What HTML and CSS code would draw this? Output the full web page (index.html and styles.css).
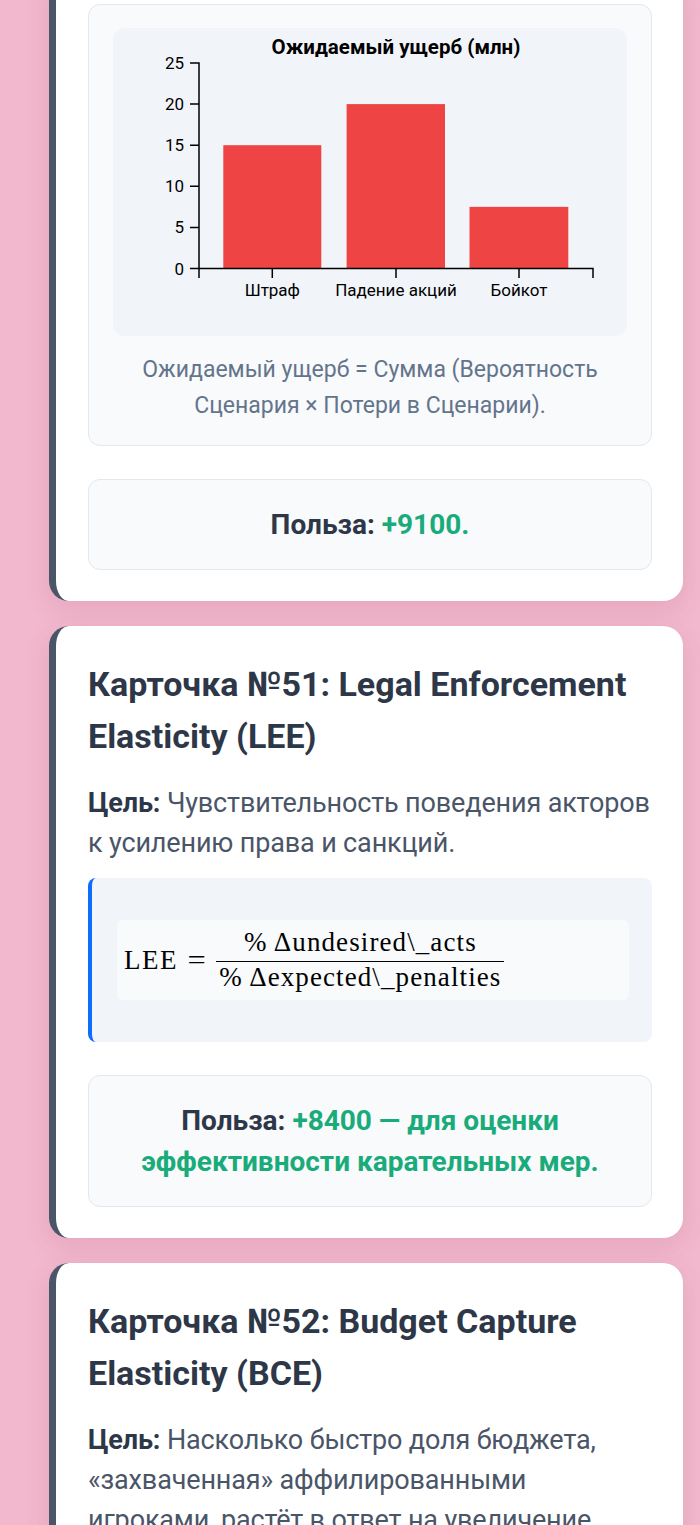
FILE: index.html
```html
<!DOCTYPE html>
<html lang="ru">
<head>
<meta charset="utf-8">
<title>Карточки</title>
<link rel="stylesheet" href="styles.css">
</head>
<body>
<main class="page">
  <section class="card card-first">
    <div class="chart-box">
      <div class="chart-area">
        <svg class="chart" viewBox="0 0 514 308" width="514" height="308">
          <text class="ch-title" x="283" y="26" text-anchor="middle">Ожидаемый ущерб (млн)</text>
          <g fill="#ef4444">
            <rect x="110.3" y="117.2" width="98" height="123.3"/>
            <rect x="233.6" y="76.1" width="98.4" height="164.4"/>
            <rect x="356.5" y="178.85" width="98.8" height="61.65"/>
          </g>
          <g stroke="#000" stroke-width="1.5" fill="none">
            <path d="M77,35H86V240.5H77"/>
            <path d="M77,76.1H86M77,117.2H86M77,158.3H86M77,199.4H86"/>
            <path d="M86,250V240.5H480V250"/>
            <path d="M159.3,240.5V250M283,240.5V250M406,240.5V250"/>
          </g>
          <g class="ch-label" text-anchor="end">
            <text x="71" y="41">25</text>
            <text x="71" y="82.1">20</text>
            <text x="71" y="123.2">15</text>
            <text x="71" y="164.3">10</text>
            <text x="71" y="205.4">5</text>
            <text x="71" y="246.5">0</text>
          </g>
          <g class="ch-label" text-anchor="middle">
            <text x="159.3" y="268">Штраф</text>
            <text x="283" y="268">Падение акций</text>
            <text x="406" y="268">Бойкот</text>
          </g>
        </svg>
      </div>
      <p class="caption">Ожидаемый ущерб = Сумма (Вероятность Сценария × Потери в Сценарии).</p>
    </div>
    <div class="benefit"><span class="benefit-label">Польза:</span> <span class="green">+9100.</span></div>
  </section>

  <section class="card">
    <h3 class="card-title">Карточка №51: Legal Enforcement Elasticity (LEE)</h3>
    <p class="goal"><strong class="goal-label">Цель:</strong> Чувствительность поведения акторов к усилению права и санкций.</p>
    <div class="formula-box">
      <div class="formula">
        <span class="mi">LEE</span><span class="eq">=</span><span class="frac"><span class="num">% Δundesired\_acts</span><span class="den">% Δexpected\_penalties</span></span>
      </div>
    </div>
    <div class="benefit"><span class="benefit-label">Польза:</span> <span class="green">+8400 — для оценки эффективности карательных мер.</span></div>
  </section>

  <section class="card">
    <h3 class="card-title">Карточка №52: Budget Capture Elasticity (BCE)</h3>
    <p class="goal"><strong class="goal-label">Цель:</strong> Насколько быстро доля бюджета, «захваченная» аффилированными игроками, растёт в ответ на увеличение общего объёма бюджета.</p>
  </section>
</main>
</body>
</html>
```

FILE: styles.css
```css
* { box-sizing: border-box; }
html, body { margin: 0; padding: 0; }
body {
  background: #f2b8cd;
  font-family: Roboto, "Noto Sans", "Liberation Sans", sans-serif;
  color: #4a5568;
  overflow: hidden;
}
.page {
  display: flex;
  flex-direction: column;
  gap: 25px;
  padding: 0 17px 60px 49px;
}
.card {
  background: #ffffff;
  border-left: 7px solid #4a5568;
  border-radius: 20px;
  padding: 32px 31px 31px 32px;
  box-shadow: 0 8px 26px rgba(150, 60, 95, 0.14);
}
.card-first { margin-top: -28px; }

.chart-box {
  background: #f8fafc;
  border: 1px solid #e2e8f0;
  border-radius: 12px;
  padding: 23px 24px 21px;
}
.chart-area {
  background: #f1f5f9;
  border-radius: 12px;
  height: 308px;
}
.chart { display: block; }
.ch-title { font-family: Roboto, sans-serif; font-weight: 700; font-size: 20.5px; fill: #000; }
.ch-label { font-family: Roboto, sans-serif; font-size: 17px; fill: #000; }
.caption {
  margin: 16px 0 0;
  text-align: center;
  font-size: 23px;
  line-height: 36px;
  color: #64748b;
}

.benefit {
  margin-top: 33px;
  background: #f8fafc;
  border: 1px solid #e2e8f0;
  border-radius: 12px;
  padding: 24px;
  text-align: center;
  font-size: 28px;
  line-height: 41px;
  font-weight: 700;
  color: #2d3748;
}
.green { color: #1aab7a; }

.card-title {
  margin: 0 0 21px;
  font-size: 34px;
  line-height: 52px;
  font-weight: 700;
  color: #2d3748;
}
.goal {
  margin: 0 0 15px;
  font-size: 27px;
  line-height: 40px;
  letter-spacing: -0.15px;
  color: #4a5568;
}
.goal-label { color: #2d3748; font-weight: 700; }

.formula-box {
  background: #f1f5f9;
  border-left: 4px solid #0d6efd;
  border-radius: 8px;
  padding: 42px 23px 42px 25px;
}
.formula {
  background: #f8fafc;
  border-radius: 6px;
  height: 80px;
  display: flex;
  align-items: center;
  padding-left: 7px;
  font-family: "Liberation Serif", "DejaVu Serif", serif;
  font-size: 27px;
  color: #000;
  line-height: 27px;
}
.mi { letter-spacing: 1.5px; }
.eq { margin: 0 12px 0 11px; transform: scaleX(1.2); }
.frac {
  display: inline-flex;
  flex-direction: column;
  align-items: center;
  letter-spacing: 1.1px;
  margin-top: 0;
}
.num {
  padding: 0 3px 5px;
  border-bottom: 1.5px solid #000;
  width: 100%;
  text-align: center;
}
.den { padding: 2px 3px 0; }
```
